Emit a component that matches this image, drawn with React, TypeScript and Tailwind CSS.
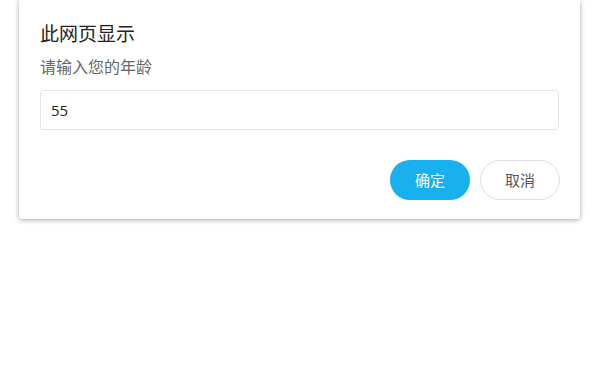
export default function App() {
  return (
    <div className="w-[605px] h-[376px] bg-white" style={{ fontFamily: '"Open Sans", "Noto Sans CJK SC", sans-serif' }}>
      <div className="ml-[19px] w-[561px] h-[219px] bg-white rounded-b-[3px] shadow-[0_1px_5px_rgba(0,0,0,0.35)] pl-[21px] pr-[20px] pt-[21px]">
        <div className="text-[19px] leading-[26px] text-[#222]">此网页显示</div>
        <div className="mt-[10px] text-[16px] leading-[20px] text-[#666]">请输入您的年龄</div>
        <div className="mt-[13px] h-[40px] w-[519px] border border-[#e6e6e6] rounded-[3px] flex items-center pl-[10px] text-[15px] text-[#222]">
          55
        </div>
        <div className="mt-[30px] flex justify-end gap-[10px]">
          <button className="w-[80px] h-[40px] rounded-full bg-[#19b0f0] text-white text-[15px]">确定</button>
          <button className="w-[80px] h-[40px] rounded-full border border-[#dedede] bg-white text-[#555] text-[15px]">取消</button>
        </div>
      </div>
    </div>
  );
}
